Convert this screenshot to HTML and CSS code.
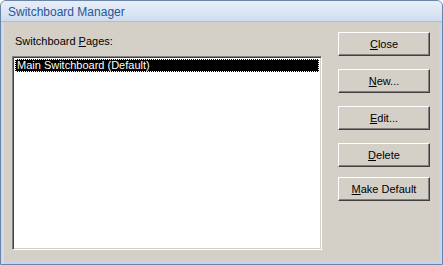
FILE: index.html
```html
<!doctype html>
<html>
<head>
    <meta charset="UTF-8">
    <title>Switchboard Manager</title>
    <link rel="stylesheet" href="styles.css">
</head>
<body>
    <div class="window">
        <div class="titlebar">Switchboard Manager</div>
        <div class="frame">
            <div class="content">
                <div class="pages">
                    <div class="label">Switchboard <u>P</u>ages:</div>
                    <div class="listbox">
                        <div class="item selected">Main Switchboard (Default)</div>
                    </div>
                </div>
                <div class="buttons">
                    <button class="btn"><u>C</u>lose</button>
                    <button class="btn"><u>N</u>ew...</button>
                    <button class="btn"><u>E</u>dit...</button>
                    <button class="btn"><u>D</u>elete</button>
                    <button class="btn btn-last"><u>M</u>ake Default</button>
                </div>
            </div>
        </div>
    </div>
</body>
</html>
```

FILE: styles.css
```css
body {
    margin: 0;
    font-family: "Liberation Sans", Arial, sans-serif;
    font-size: 11px;
    background: #ffffff;
}
.window {
    width: 443px;
    height: 265px;
    box-sizing: border-box;
    border: 1px solid #6c84a8;
    border-radius: 6px 6px 0 0;
    background: #c9d7ec;
    display: flex;
    flex-direction: column;
    overflow: hidden;
}
.titlebar {
    height: 20px;
    line-height: 22px;
    padding-left: 7px;
    font-size: 12px;
    color: #2a5494;
    background: linear-gradient(#e6eef9, #dae5f4 60%, #cfdcf0);
    border-bottom: 1px solid #a9bedc;
    flex: none;
}
.frame {
    flex: 1;
    padding: 0 3px 3px 3px;
    background: linear-gradient(90deg, #c2d2ea, #d5e0f1 2px, #c6d5ec 3px);
    display: flex;
}
.content {
    flex: 1;
    display: flex;
    padding: 10px 9px 0 8px;
    background: #d4d0c8;
}
.pages {
    width: 310px;
}
.label {
    margin-top: 2px;
    height: 14px;
    line-height: 14px;
    padding-left: 3px;
    margin-bottom: 8px;
    color: #000;
}
.listbox {
    height: 194px;
    box-sizing: border-box;
    background: #ffffff;
    border-top: 1px solid #808080;
    border-left: 1px solid #808080;
    border-right: 1px solid #ffffff;
    border-bottom: 1px solid #ffffff;
    box-shadow: inset 1px 1px 0 #404040, inset -1px -1px 0 #d4d0c8;
    padding: 2px;
}
.item {
    height: 13px;
    line-height: 13px;
    padding-left: 2px;
}
.selected {
    background: #000000;
    color: #ffffff;
    outline: 1px dotted #ffffff;
    outline-offset: -1px;
}
.buttons {
    margin-left: 16px;
    display: flex;
    flex-direction: column;
    gap: 13px;
}
.btn {
    width: 92px;
    height: 24px;
    padding: 0;
    font-family: "Liberation Sans", Arial, sans-serif;
    font-size: 11px;
    color: #000;
    background: #d4d0c8;
    border-top: 1px solid #ffffff;
    border-left: 1px solid #ffffff;
    border-right: 1px solid #404040;
    border-bottom: 1px solid #404040;
    box-shadow: inset -1px -1px 0 #808080;
}
.btn-last {
    margin-top: -3px;
}
```
